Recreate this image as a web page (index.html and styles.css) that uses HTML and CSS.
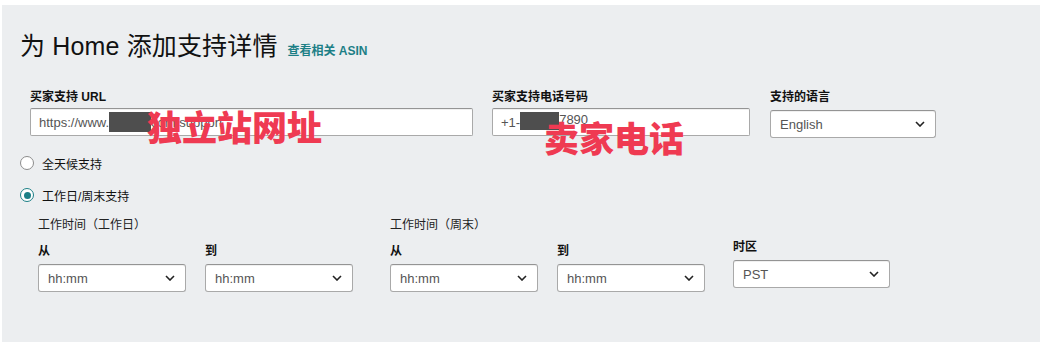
FILE: index.html
```html
<!DOCTYPE html>
<html lang="zh-CN">
<head>
<meta charset="utf-8">
<link rel="stylesheet" href="styles.css">
</head>
<body>
<div class="panel">
  <div class="title-row">
    <h1 class="title">为 Home 添加支持详情</h1>
    <a class="link">查看相关 ASIN</a>
  </div>

  <div class="top-fields">
    <div class="field f-url">
      <div class="label">买家支持 URL</div>
      <div class="input">
        <span>https://www.</span><span class="redact r-url"></span><span>com/support</span>
      </div>
      <div class="stamp s-url">独立站网址</div>
    </div>
    <div class="field f-phone">
      <div class="label">买家支持电话号码</div>
      <div class="input">
        <span>+1-</span><span class="redact r-phone"></span><span>7890</span>
      </div>
      <div class="stamp s-phone">卖家电话</div>
    </div>
    <div class="field f-lang">
      <div class="label">支持的语言</div>
      <div class="select s-lang"><span>English</span><svg class="chev" viewBox="0 0 10 6"><path d="M1 1l4 4 4-4" fill="none" stroke="#222" stroke-width="1.6"/></svg></div>
    </div>
  </div>

  <div class="radio-row r1"><span class="radio"></span><span class="rtext">全天候支持</span></div>
  <div class="radio-row r2"><span class="radio on"><span class="dot"></span></span><span class="rtext">工作日/周末支持</span></div>

  <div class="hours">
    <div class="group g1">
      <div class="gtitle">工作时间（工作日）</div>
      <div class="pair">
        <div class="tf">
          <div class="label">从</div>
          <div class="select s-time"><span>hh:mm</span><svg class="chev" viewBox="0 0 10 6"><path d="M1 1l4 4 4-4" fill="none" stroke="#222" stroke-width="1.6"/></svg></div>
        </div>
        <div class="tf">
          <div class="label">到</div>
          <div class="select s-time"><span>hh:mm</span><svg class="chev" viewBox="0 0 10 6"><path d="M1 1l4 4 4-4" fill="none" stroke="#222" stroke-width="1.6"/></svg></div>
        </div>
      </div>
    </div>
    <div class="group g2">
      <div class="gtitle">工作时间（周末）</div>
      <div class="pair">
        <div class="tf">
          <div class="label">从</div>
          <div class="select s-time"><span>hh:mm</span><svg class="chev" viewBox="0 0 10 6"><path d="M1 1l4 4 4-4" fill="none" stroke="#222" stroke-width="1.6"/></svg></div>
        </div>
        <div class="tf">
          <div class="label">到</div>
          <div class="select s-time"><span>hh:mm</span><svg class="chev" viewBox="0 0 10 6"><path d="M1 1l4 4 4-4" fill="none" stroke="#222" stroke-width="1.6"/></svg></div>
        </div>
      </div>
    </div>
    <div class="group g3">
      <div class="label">时区</div>
      <div class="select s-tz"><span>PST</span><svg class="chev" viewBox="0 0 10 6"><path d="M1 1l4 4 4-4" fill="none" stroke="#222" stroke-width="1.6"/></svg></div>
    </div>
  </div>
</div>
</body>
</html>
```

FILE: styles.css
```css
html, body {
  margin: 0;
  padding: 0;
  background: #ffffff;
}
body {
  font-family: "Liberation Sans", "Noto Sans CJK SC", Arial, sans-serif;
  color: #111111;
  width: 1047px;
  height: 342px;
  overflow: hidden;
}
.panel {
  margin: 5px 7px 0 2px;
  height: 337px;
  background: #eceef0;
  padding: 0 0 0 18px;
  box-sizing: border-box;
  position: relative;
}
.title-row {
  display: flex;
  align-items: baseline;
  gap: 10px;
  padding-top: 26px;
  height: 34px;
}
.title {
  margin: 0;
  font-size: 25px;
  font-weight: normal;
  line-height: 30px;
  color: #111;
  letter-spacing: 0.15px;
}
.link {
  font-size: 12px;
  color: #1c7f86;
  font-weight: bold;
}
.top-fields {
  display: flex;
  padding-left: 10px;
  margin-top: 24px;
}
.field {
  position: relative;
  display: flex;
  flex-direction: column;
}
.f-url { width: 443px; margin-right: 19px; }
.f-phone { width: 258px; margin-right: 20px; }
.f-lang { width: 166px; }
.label {
  font-size: 12px;
  font-weight: bold;
  line-height: 16px;
  height: 16px;
  margin-bottom: 3px;
  color: #111;
}
.input, .select {
  box-sizing: border-box;
  height: 28px;
  background: #fff;
  border: 1px solid #a9a9a9;
  border-top-color: #949494;
  border-radius: 2px;
  box-shadow: 0 1px 0 rgba(0,0,0,0.06) inset;
  font-size: 13px;
  color: #555;
  display: flex;
  align-items: center;
  padding: 0 8px;
}
.f-lang .select { margin-top: 2px; }
.redact {
  display: inline-block;
  height: 20px;
  background: #4e4e4e;
}
.r-url { width: 42px; }
.r-phone { width: 39px; height: 18px; margin-top: -2px; }
.f-phone .input span:last-child { margin-top: -6px; }
.stamp {
  position: absolute;
  color: #ef3a52;
  font-family: "Noto Sans CJK SC", sans-serif;
  font-weight: 900;
  font-size: 35px;
  line-height: 40px;
  letter-spacing: 0;
  white-space: nowrap;
}
.s-url { left: 117px; top: 17px; }
.s-phone { left: 52px; top: 28px; }
.select {
  justify-content: space-between;
  padding: 0 10px 0 9px;
  border-radius: 3px;
}
.chev {
  width: 10px;
  height: 6px;
}
.radio-row {
  display: flex;
  align-items: center;
  gap: 8px;
  font-size: 12px;
  height: 16px;
}
.r1 { margin-top: 17px; }
.r2 { margin-top: 16px; }
.radio {
  box-sizing: border-box;
  width: 14px;
  height: 14px;
  border-radius: 50%;
  border: 1px solid #8c8c8c;
  background: #fff;
  display: flex;
  align-items: center;
  justify-content: center;
}
.radio.on { border-color: #1c7f86; }
.dot {
  width: 7px;
  height: 7px;
  border-radius: 50%;
  background: #1c7f86;
}
.rtext { color: #111; }
.hours {
  display: flex;
  align-items: flex-start;
  padding-left: 18px;
  margin-top: 14px;
}
.group { display: flex; flex-direction: column; }
.g1 { width: 352px; }
.g2 { width: 343px; }
.gtitle {
  font-size: 12px;
  line-height: 16px;
  color: #222;
  margin-bottom: 10px;
}
.pair { display: flex; gap: 19px; }
.tf { display: flex; flex-direction: column; }
.s-time { width: 148px; margin-top: 2px; }
.g3 { padding-top: 22px; }
.s-tz { width: 157px; margin-top: 2px; }
```
